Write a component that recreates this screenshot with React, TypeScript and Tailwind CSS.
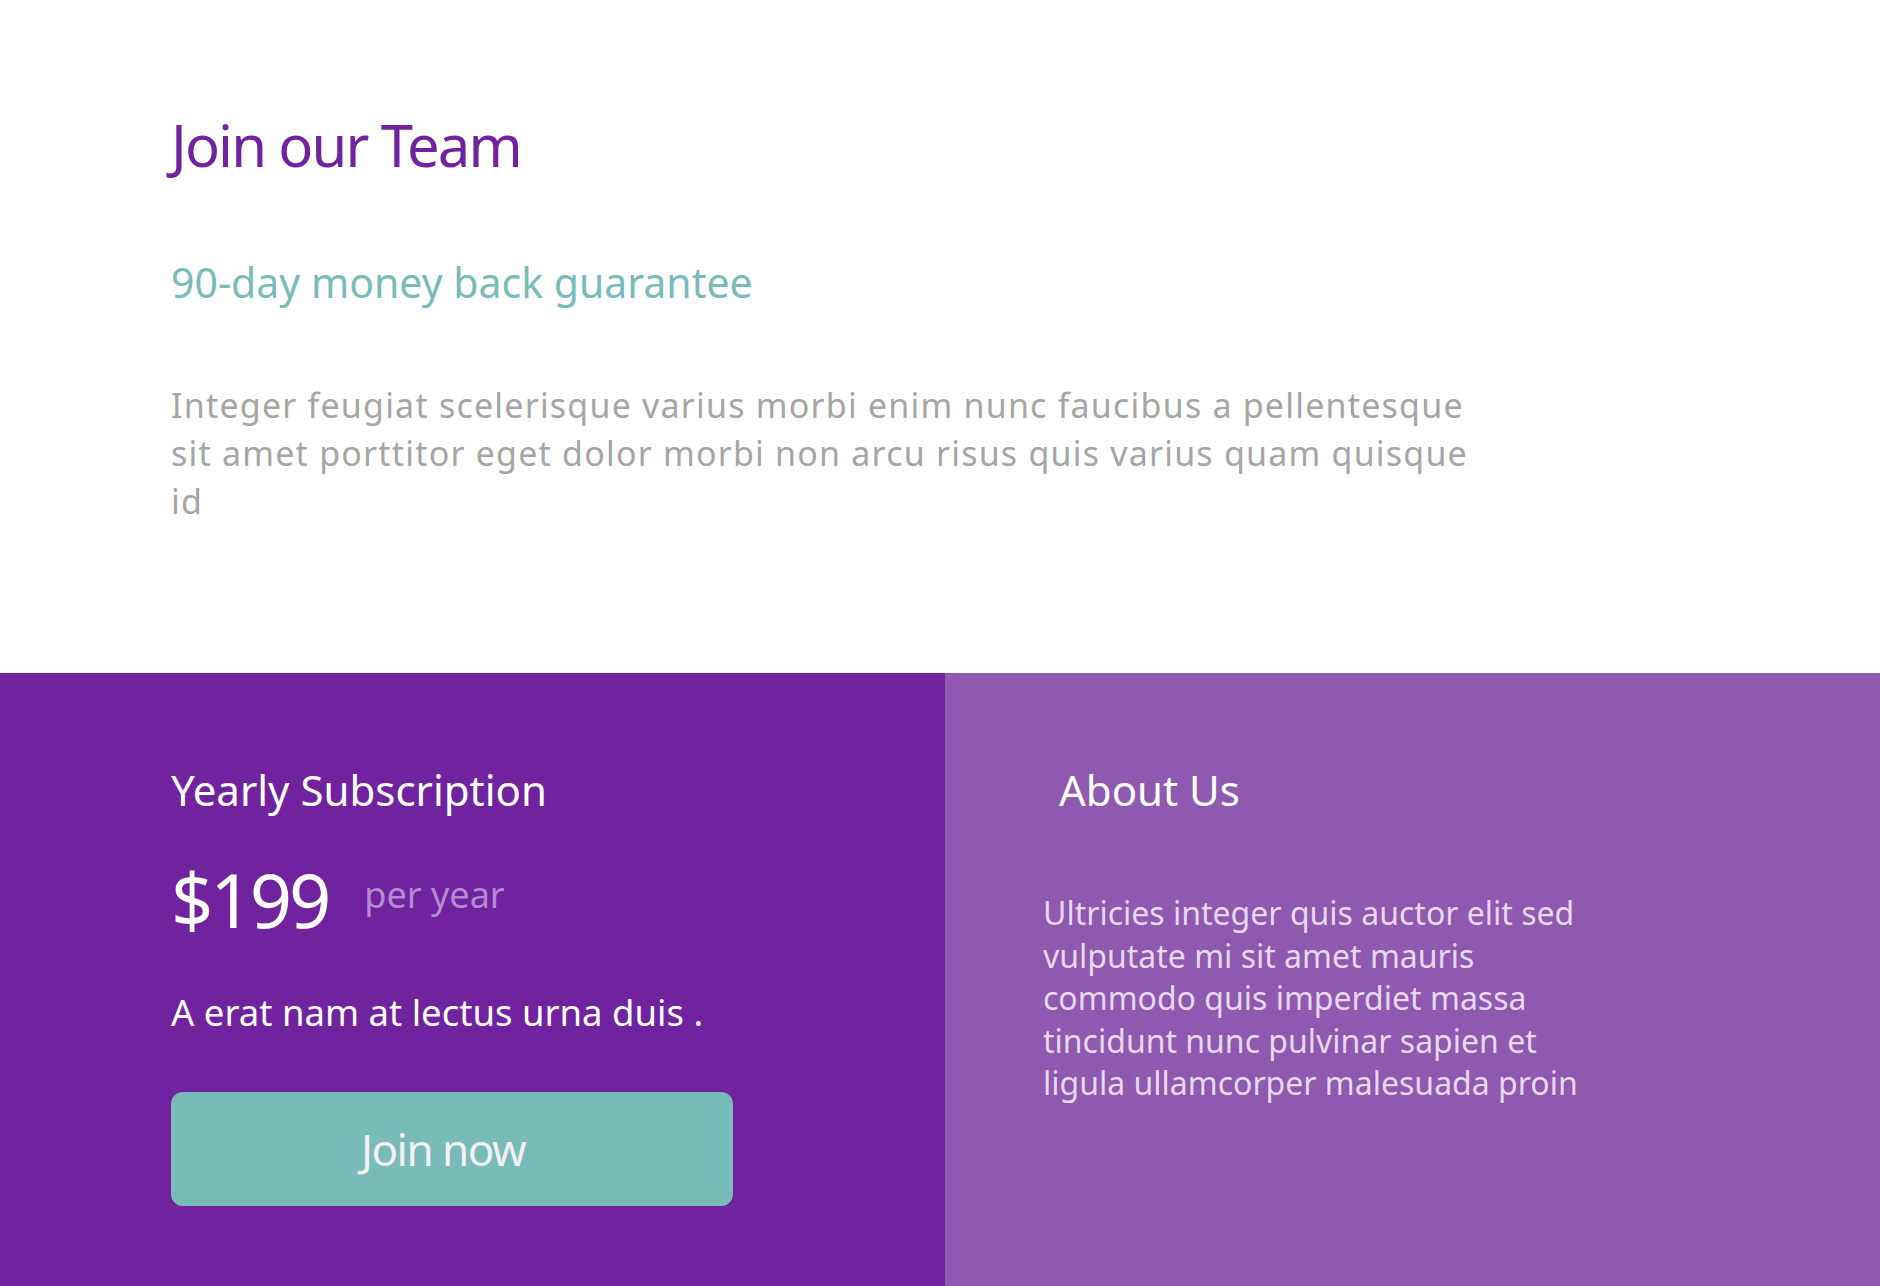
export default function App() {
  const font = { fontFamily: '"Noto Sans", "Open Sans", sans-serif' };
  return (
    <div className="w-[1880px] h-[1286px] overflow-hidden bg-white flex flex-col" style={font}>
      <section className="h-[673px] shrink-0 pl-[171px] pt-[116px] flex flex-col">
        <h1 className="text-[58px] leading-none text-[#71229f] tracking-[-1.9px]">Join our Team</h1>
        <h2 className="mt-[88px] text-[41px] leading-none text-[#78bbb9]">90-day money back guarantee</h2>
        <p className="mt-[78px] text-[34px] leading-[48px] tracking-[1.2px] text-[#a5a5a5] whitespace-nowrap">
          Integer feugiat scelerisque varius morbi enim nunc faucibus a pellentesque
          <br />
          sit amet porttitor eget dolor morbi non arcu risus quis varius quam quisque
          <br />
          id
        </p>
      </section>
      <section className="flex-1 grid grid-cols-[945px_1fr]">
        <div className="bg-[#71229f] pl-[171px] pt-[96px] flex flex-col">
          <h3 className="text-[42px] leading-none text-white">Yearly Subscription</h3>
          <div className="mt-[52px] flex items-start gap-[36px]">
            <span className="text-[74px] leading-none text-white tracking-[-3px]">$199</span>
            <span className="mt-[14px] text-[36px] leading-none text-[#b48ad0]">per year</span>
          </div>
          <p className="mt-[57px] text-[36.5px] leading-none text-white">A erat nam at lectus urna duis .</p>
          <button className="mt-[61px] w-[562px] h-[114px] rounded-[12px] bg-[#78bbb9] text-[44px] leading-none tracking-[-1.5px] text-[#f2f2f2] flex items-center justify-center pr-[18px]">
            Join now
          </button>
        </div>
        <div className="bg-[#8e59af] pl-[98px] pt-[96px] flex flex-col">
          <h3 className="ml-[16px] text-[42px] leading-none text-white">About Us</h3>
          <p className="mt-[81px] text-[32px] leading-[42.5px] text-[#e6d8ee] whitespace-nowrap">
            Ultricies integer quis auctor elit sed
            <br />
            vulputate mi sit amet mauris
            <br />
            commodo quis imperdiet massa
            <br />
            tincidunt nunc pulvinar sapien et
            <br />
            ligula ullamcorper malesuada proin
          </p>
        </div>
      </section>
    </div>
  );
}
